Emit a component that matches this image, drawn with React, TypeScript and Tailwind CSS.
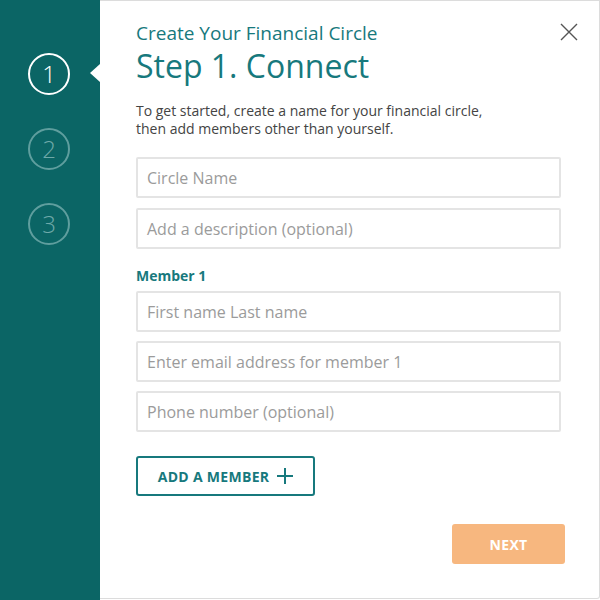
import React from "react";

const font = { fontFamily: "'Open Sans', Lato, sans-serif" };

function Field({ placeholder }: { placeholder: string }) {
  return (
    <div className="h-[41px] w-[425px] border-2 border-[#e4e4e4] rounded-[2px] flex items-center pl-[9px] text-[16px] text-[#9b9b9b]">
      {placeholder}
    </div>
  );
}

function StepCircle({ n, active }: { n: number; active?: boolean }) {
  return (
    <div
      className={
        "w-[42px] h-[42px] rounded-full border-2 flex items-center justify-center text-[24px] font-light " +
        (active ? "border-white text-white" : "border-[#5f9e9e] text-[#6fa9a9]")
      }
    >
      {n}
    </div>
  );
}

export default function App() {
  return (
    <div className="w-[600px] h-[600px] flex bg-white" style={font}>
      <div className="w-[100px] h-full bg-[#0b6565] relative flex flex-col items-center pt-[53px] gap-[33px] pr-[2px]">
        <StepCircle n={1} active />
        <StepCircle n={2} />
        <StepCircle n={3} />
        <div className="absolute right-0 top-[64px] w-0 h-0 border-y-[9px] border-y-transparent border-r-[10px] border-r-white" />
      </div>
      <div className="flex-1 h-[599px] border-t border-r border-b border-[#dcdcdc] rounded-br-[3px] relative pl-[36px] pt-[19px]">
        <button className="absolute right-[21px] top-[22px] w-[18px] h-[18px]">
          <svg viewBox="0 0 18 18" width="18" height="18">
            <path d="M1 1 L17 17 M17 1 L1 17" stroke="#555" strokeWidth="1.4" fill="none" />
          </svg>
        </button>
        <div className="text-[19px] leading-[26px] text-[#17797d]">Create Your Financial Circle</div>
        <div className="text-[32px] leading-[40px] text-[#17797d]">Step 1. Connect</div>
        <p className="text-[14px] leading-[18px] text-[#444] mt-[16px]">
          To get started, create a name for your financial circle,
          <br />
          then add members other than yourself.
        </p>
        <div className="mt-[19px] flex flex-col gap-[10px]">
          <Field placeholder="Circle Name" />
          <Field placeholder="Add a description (optional)" />
        </div>
        <div className="mt-[18px] text-[14px] font-bold text-[#17797d] leading-[18px]">Member 1</div>
        <div className="mt-[6px] flex flex-col gap-[9px]">
          <Field placeholder="First name Last name" />
          <Field placeholder="Enter email address for member 1" />
          <Field placeholder="Phone number (optional)" />
        </div>
        <button className="mt-[24px] w-[179px] h-[40px] border-2 border-[#17797d] rounded-[3px] flex items-center justify-center gap-[8px] text-[14px] font-bold text-[#17797d] tracking-[0.3px]">
          ADD A MEMBER
          <svg viewBox="0 0 16 16" width="16" height="16">
            <path d="M8 0 V16 M0 8 H16" stroke="#17797d" strokeWidth="2" />
          </svg>
        </button>
        <div className="flex justify-end pr-[34px] mt-[28px]">
          <button className="w-[113px] h-[40px] bg-[#f7b77f] rounded-[3px] text-white text-[14px] font-bold tracking-[0.3px]">
            NEXT
          </button>
        </div>
      </div>
    </div>
  );
}
